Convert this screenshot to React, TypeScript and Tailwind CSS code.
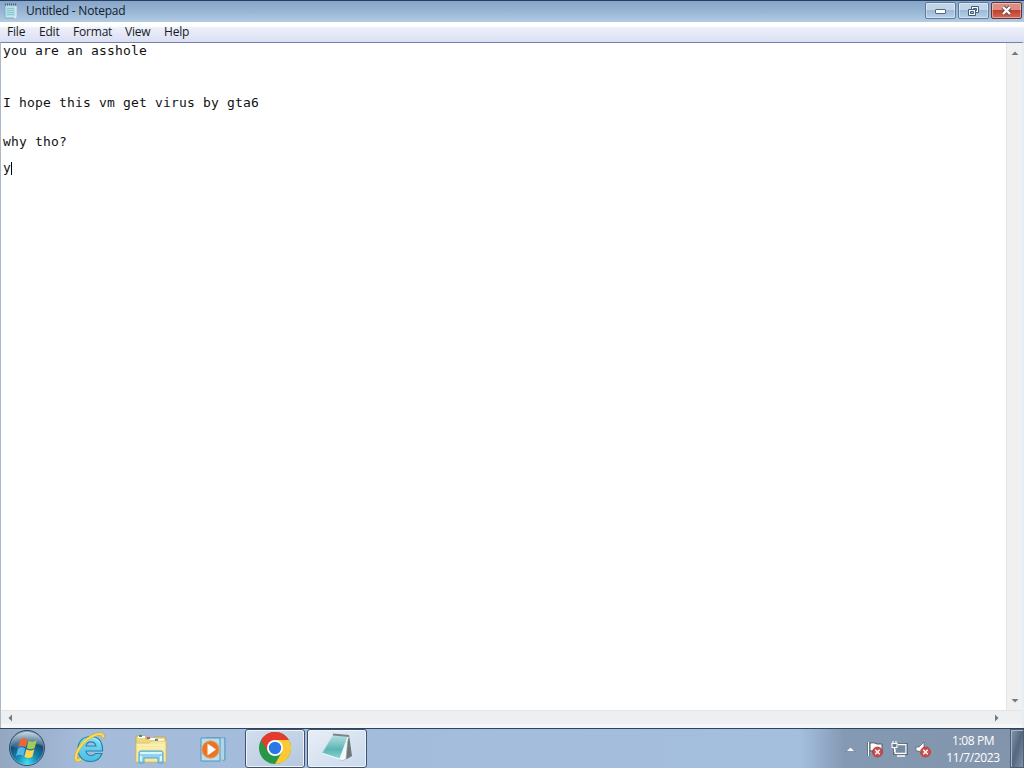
import type { ReactNode } from "react";

const menus = [
  { label: "File", width: "w-[32px]" },
  { label: "Edit", width: "w-[34px]" },
  { label: "Format", width: "w-[52px]" },
  { label: "View", width: "w-[39px]" },
  { label: "Help", width: "w-[40px]" },
];

const lines = [
  "you are an asshole",
  "",
  "",
  "",
  "I hope this vm get virus by gta6",
  "",
  "",
  "why tho?",
  "",
  "y",
];

function NotepadSmallIcon() {
  return (
    <svg width="16" height="17" viewBox="0 0 16 17">
      <path d="M2 3h11v12l-1 1H2z" fill="#c5e8ee" stroke="#7c9cab" strokeWidth=".8" />
      <path d="M3 4h9v10H3z" fill="#b2e0e8" />
      <path d="M4 6.500h7M4 8.500h7M4 10.500h7M4 12.500h7" stroke="#7fbccb" strokeWidth=".8" />
      <path d="M2 2.500h11" stroke="#53616c" strokeWidth="2" strokeDasharray="1 1" />
      <path d="M13 4v11l-2 1" stroke="#fff" fill="none" />
    </svg>
  );
}

function StartOrb() {
  return (
    <svg width="40" height="39" viewBox="0 0 40 39">
      <defs>
        <radialGradient id="orb" cx="50%" cy="92%" r="82%">
          <stop offset="0" stopColor="#3de0f6" />
          <stop offset=".35" stopColor="#168bb5" />
          <stop offset=".75" stopColor="#174a73" />
          <stop offset="1" stopColor="#59778f" />
        </radialGradient>
        <linearGradient id="orbShine" x1="0" y1="0" x2="0" y2="1">
          <stop offset="0" stopColor="#e1eef5" stopOpacity=".8" />
          <stop offset="1" stopColor="#8eafc4" stopOpacity=".2" />
        </linearGradient>
      </defs>
      <circle cx="20" cy="19" r="17.5" fill="url(#orb)" stroke="#2b4963" />
      <path d="M4 17C5-2 35-2 36 17Q28 13 20 17T4 17Z" fill="url(#orbShine)" />
      <path d="M13.500 10.500q3.500-2.500 7 .3l-2 7.500q-3.500-2.500-7.200-.3z" fill="#ef6630" />
      <path d="M21.700 11.500q4 2.500 8-.2l-2 7.700q-4 2.500-8 0z" fill="#a3cd4e" />
      <path d="M11 19.500q3.500-2.500 7.200 0l-2 7.500q-3.500-2.500-7.200 0z" fill="#58b4ee" />
      <path d="M19.400 20.300q4 2.500 8 0l-2 7.500q-4 2.500-8 0z" fill="#ffd54d" />
      <circle cx="20" cy="19" r="16.7" fill="none" stroke="#b9e0ed" strokeWidth=".6" opacity=".6" />
    </svg>
  );
}

function ExplorerIcon() {
  return (
    <svg width="32" height="34" viewBox="0 0 32 34">
      <defs>
        <linearGradient id="ieBlue" x1="0" y1="0" x2="0" y2="1">
          <stop offset="0" stopColor="#85dff8" />
          <stop offset="1" stopColor="#48bce8" />
        </linearGradient>
      </defs>
      <path
        d="M28.500 20H12C12.500 23 14 24.500 17 24.500Q20 24.500 21.500 22.500H28C26 28 22.500 30.500 17 30.500C9 30.500 4 25.500 4 18S9 5.500 17 5.500C24.500 5.500 29 11 28.500 20ZM12 15H22C21.500 12 20 10.800 17 10.800S12.500 12 12 15Z"
        fill="url(#ieBlue)" stroke="#2386a5" strokeWidth="1.200" fillRule="evenodd"
      />
      <path d="M7 14Q10 7.500 17 7Q23 7 26 12" fill="none" stroke="#b5eefc" strokeWidth="1.200" opacity=".8" />
      <path d="M28.500 7Q30.500 3 26 3Q19 3 10 11Q1 21 2 28Q3 31 7 28" fill="none" stroke="#d3a526" strokeWidth="3" />
      <path d="M28.500 6.500Q30 3 26 3Q19 3 10 11Q1 21 2 28Q3 31 7 28" fill="none" stroke="#fbdc50" strokeWidth="2.200" />
    </svg>
  );
}

function FolderIcon() {
  return (
    <svg width="34" height="32" viewBox="0 0 34 32">
      <path d="M2 5V2h10v3h8V3h11l1 3v22H2z" fill="#ead889" stroke="#c5ac58" />
      <path d="M4 3h7M15 5h6M22 6h8" stroke="#fff" strokeWidth="2" />
      <path d="M5 2h3" stroke="#35a244" strokeWidth="2" />
      <path d="M13 4h3" stroke="#dc562e" strokeWidth="2" />
      <path d="M21 6h3" stroke="#3484c7" strokeWidth="2" />
      <path d="M2 9h13l3-2h14v21H2z" fill="#f8e9a0" stroke="#d6bd67" strokeWidth=".7" />
      <path d="M3 11h28M3 14h28" stroke="#fff4bd" />
      <path d="M5 29V19q0-2 2-2h20q2 0 2 2v10h-5v-5H10v5z" fill="#91d3ec" stroke="#50a5cf" />
      <path d="M6 19h22M7 22v5M27 22v5" stroke="#d9f6ff" strokeWidth="2" />
    </svg>
  );
}

function MediaIcon() {
  return (
    <svg width="28" height="27" viewBox="0 0 28 27">
      <path d="M7 2h19v22H8z" fill="#86bdde" stroke="#4786b3" strokeWidth=".7" />
      <path d="M22 2v23M24 2v22" stroke="#d8edf8" />
      <path d="M2 2h19v23H2z" fill="#b9e0f0" stroke="#4f98bf" />
      <circle cx="11.500" cy="13.500" r="8.700" fill="#e87528" stroke="#f4a15d" />
      <path d="M8.500 7.500l8.500 6-8.500 6z" fill="#fff" />
    </svg>
  );
}

function ChromeIcon() {
  return (
    <svg width="32" height="32" viewBox="0 0 32 32">
      <circle cx="16" cy="16" r="16" fill="#279847" />
      <path d="M22.930 20L16 32A16 16 0 0 0 29.860 8H16z" fill="#fcc934" />
      <path d="M2.140 8L9.070 20L16 8h13.860A16 16 0 0 0 2.140 8z" fill="#e33b2e" />
      <circle cx="16" cy="16" r="8" fill="#fff" />
      <circle cx="16" cy="16" r="6.200" fill="#2878e5" />
    </svg>
  );
}

function NotepadIcon() {
  return (
    <svg width="34" height="32" viewBox="0 0 34 32">
      <defs>
        <linearGradient id="paper" x1="0" y1="0" x2="0" y2="1">
          <stop offset="0" stopColor="#b9dfe2" />
          <stop offset=".6" stopColor="#5bb5b4" />
          <stop offset="1" stopColor="#8bd5d3" />
        </linearGradient>
      </defs>
      <path d="M29 3l3 21-5 3-3-1z" fill="#6f7878" />
      <path d="M28 5l-2 22-4 2-3-2z" fill="#f4fafb" stroke="#9cabb0" strokeWidth=".6" />
      <path d="M13 3l15 2-8 22L2 21z" fill="url(#paper)" stroke="#bce5e2" strokeWidth=".6" />
      <path d="M2 21.500l18 5.500L28 5" fill="none" stroke="#eaf8f7" strokeWidth="1.200" />
      <path d="M13 2.500l16 1.500" stroke="#78868a" strokeWidth="2" />
    </svg>
  );
}

function ErrorBadge({ x, y }: { x: number; y: number }) {
  return (
    <g transform={`translate(${x} ${y})`}>
      <circle r="5" fill="#d34a44" stroke="#a6373a" strokeWidth=".7" />
      <path d="M-2.200-2.200l4.400 4.400M2.200-2.200l-4.400 4.400" stroke="#fff" strokeWidth="1.500" />
    </g>
  );
}

function TrayIcons() {
  return (
    <svg width="94" height="20" viewBox="0 0 94 20">
      <path d="M4 11.500l4.500-4.500 4.500 4.500z" fill="#f5f8ff" stroke="#4f627c" strokeWidth=".5" />
      <path d="M26.500 2v14" stroke="#38475b" strokeWidth="3" />
      <path d="M28 3q4-1 7 1h5v8h-5q-3-2-7-1z" fill="#fff" stroke="#4b5a6b" />
      <path d="M26.500 2v14" stroke="#fff" strokeWidth="1.500" />
      <ErrorBadge x={35.500} y={12} />
      <path d="M56 4.500h8v9H53V9" fill="none" stroke="#344657" strokeWidth="3" />
      <path d="M56 4.500h8v9H53V9" fill="#768ba0" />
      <path d="M56 4.500h8v9H53V9M55 16h8" fill="none" stroke="#fff" strokeWidth="1.300" />
      <path d="M51 1v3M54 1v3M50 3.500h5v4h-5zM52.500 8v4" fill="#697d91" stroke="#fff" strokeWidth="1.100" />
      <path d="M74 7h3l5-5v14l-5-5h-3z" fill="#fff" stroke="#596a7d" strokeWidth=".8" />
      <ErrorBadge x={83.500} y={12} />
    </svg>
  );
}

function CaptionButton({ className, children }: { className: string; children: ReactNode }) {
  return (
    <div className={`h-[17px] flex items-center justify-center border rounded-[2px] shadow-[inset_0_0_0_1px_rgba(255,255,255,0.4)] ${className}`}>
      {children}
    </div>
  );
}

function TitleBar() {
  return (
    <div className="h-[22px] shrink-0 flex items-start border-t border-[#27405f] bg-linear-to-b from-[#86a5c9] via-[#98b5d5] to-[#b3cce4]">
      <div className="pl-[3px] pt-px">
        <NotepadSmallIcon />
      </div>
      <div className="pl-[7px] text-[12px] leading-[19px] tracking-[-0.23px] text-[#141d2b]">Untitled - Notepad</div>
      <div className="ml-auto mr-[2px] mt-px flex gap-[2px]">
        <CaptionButton className="w-[31px] border-[#5d7b9b] bg-linear-to-b from-[#c1d5e9] from-45% via-[#9cb9d6] via-50% to-[#b8d0e8]">
          <svg width="12" height="6" viewBox="0 0 12 6" className="mt-[3px]">
            <rect x=".5" y=".5" width="10" height="4" rx=".5" fill="#fff" stroke="#51677e" />
          </svg>
        </CaptionButton>
        <CaptionButton className="w-[31px] border-[#5d7b9b] bg-linear-to-b from-[#c1d5e9] from-45% via-[#9cb9d6] via-50% to-[#b8d0e8]">
          <svg width="13" height="12" viewBox="0 0 13 12">
            <path d="M4.500 1.500h7v6h-7z" fill="#f8fcff" stroke="#465d77" />
            <path d="M6.500 3.500h3v2h-3z" fill="#9db9d2" stroke="#465d77" />
            <path d="M1.500 4.500h7v6h-7z" fill="#f8fcff" stroke="#465d77" />
            <path d="M3.500 6.500h3v2h-3z" fill="#9db9d2" stroke="#465d77" />
          </svg>
        </CaptionButton>
        <CaptionButton className="w-[31px] border-[#68313b] bg-linear-to-b from-[#dc8e82] from-45% via-[#bd4032] via-50% to-[#d46850]">
          <svg width="13" height="11" viewBox="0 0 13 11">
            <path d="M3 2l7 7M10 2L3 9" stroke="#60464d" strokeWidth="4" />
            <path d="M3 2l7 7M10 2L3 9" stroke="#fff" strokeWidth="2.400" />
          </svg>
        </CaptionButton>
      </div>
    </div>
  );
}

function MenuBar() {
  return (
    <div className="h-5 shrink-0 flex pl-[7px] text-[12px] leading-[20px] tracking-[-0.2px] text-[#171b24] bg-linear-to-b from-white from-20% via-[#eceffa] via-30% to-[#dcdff2]">
      {menus.map((m) => (
        <span key={m.label} className={`${m.width} whitespace-nowrap`}>
          {m.label}
        </span>
      ))}
    </div>
  );
}

function Arrow({ d }: { d: string }) {
  return (
    <svg width="8" height="8" viewBox="0 0 8 8">
      <path d={d} fill="#727980" />
    </svg>
  );
}

function Editor() {
  return (
    <div className="flex-1 min-h-0 flex flex-col border-t border-l border-r-2 border-t-[#7183aa] border-l-[#acb9ca] border-r-[#e5edf5] bg-[#eeeff1]">
      <div className="flex-1 min-h-0 flex">
        <div className="flex-1 bg-white pl-[2px] pt-px font-['DejaVu_Sans_Mono',monospace] text-[13px] tracking-[0.174px] leading-[13px] text-[#111]">
          {lines.map((line, i) => (
            <div key={i} className="h-[13px] flex whitespace-pre">
              {line}
              {i === lines.length - 1 && <span className="mt-px w-px h-[13px] bg-black" />}
            </div>
          ))}
        </div>
        <div className="w-4 border-l border-[#e4e4e4] bg-[#f0f0f0] flex flex-col items-center justify-between pt-[6px] pb-[5px]">
          <Arrow d="M.5 6L4 2.500 7.500 6z" />
          <Arrow d="M.5 2L4 5.500 7.500 2z" />
        </div>
      </div>
      <div className="h-[18px] shrink-0 border-t border-[#e4e4e4] border-b-4 border-b-[#f4f6fa] flex items-center justify-between pl-[5px] pr-[21px]">
        <Arrow d="M6 .5L2.500 4 6 7.500z" />
        <Arrow d="M2 .5L5.500 4 2 7.500z" />
      </div>
    </div>
  );
}

function TaskButton({ active, children }: { active?: boolean; children: ReactNode }) {
  return (
    <div
      className={`w-[60px] h-[39px] pb-px flex items-center justify-center rounded-[3px] border border-[#3f536d] shadow-[inset_0_0_0_1px_#edf3fb] ${
        active ? "bg-linear-to-br from-[#e8eef7] to-[#c9d9ec]" : "bg-linear-to-br from-[#d3deed] to-[#b5c7df]"
      }`}
    >
      {children}
    </div>
  );
}

function Taskbar() {
  return (
    <div className="h-10 shrink-0 flex border-t border-[#2e435c] bg-linear-to-r from-[#93a7c1] via-[#a4bbda] via-8% to-[#a4bfdf]">
      <div className="w-[59px] pl-[7px]">
        <StartOrb />
      </div>
      <div className="w-[62px] pb-[2px] flex items-center justify-center">
        <ExplorerIcon />
      </div>
      <div className="w-[61px] pt-[2px] pr-px flex items-center justify-center">
        <FolderIcon />
      </div>
      <div className="w-[63px] pr-[2px] pt-px flex items-center justify-center">
        <MediaIcon />
      </div>
      <div className="flex gap-[2px]">
        <TaskButton>
          <ChromeIcon />
        </TaskButton>
        <TaskButton active>
          <NotepadIcon />
        </TaskButton>
      </div>
      <div className="ml-auto w-[224px] flex bg-linear-to-r from-[#a4bfdf] via-[#8499b3] via-20% to-[#8294ab]">
        <div className="pl-[42px] pt-[11px]">
          <TrayIcons />
        </div>
        <div className="w-[75px] text-center text-[12px] leading-[17px] tracking-[-0.36px] pt-[3px] text-white">
          <div>1:08 PM</div>
          <div>11/7/2023</div>
        </div>
        <div className="w-[14px] ml-auto border border-[#4b5e75] shadow-[inset_1px_1px_0_#a8b6c7] bg-linear-to-br from-[#8999ad] via-[#53677f] to-[#8192a8]" />
      </div>
    </div>
  );
}

export default function App() {
  return (
    <div className="w-[1024px] h-[768px] overflow-hidden flex flex-col font-['Open_Sans','Noto_Sans',sans-serif]">
      <TitleBar />
      <MenuBar />
      <Editor />
      <Taskbar />
    </div>
  );
}
